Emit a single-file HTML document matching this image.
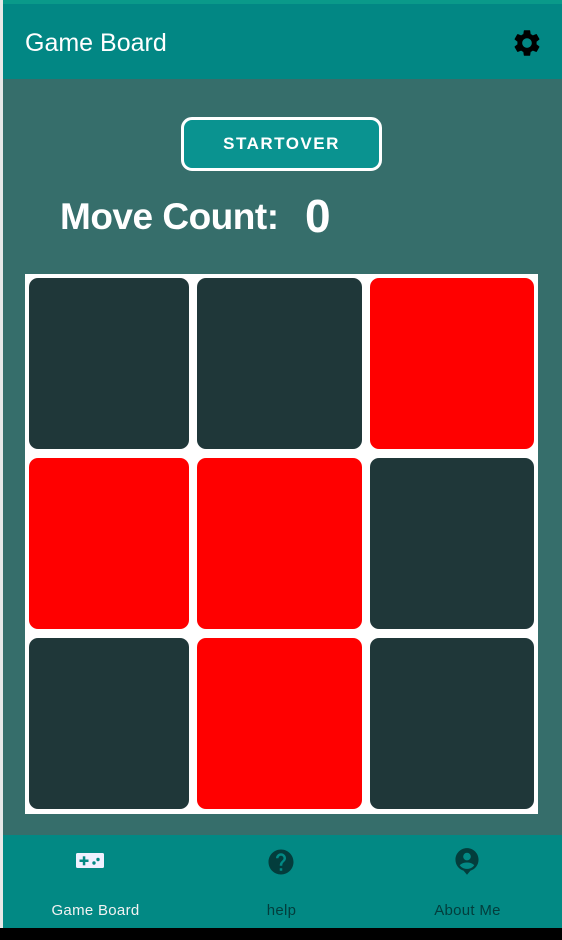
<!DOCTYPE html>
<html><head><style>
*{margin:0;padding:0;box-sizing:border-box}
body{width:562px;height:940px;position:relative;background:#366e6b;font-family:"Liberation Sans",sans-serif;overflow:hidden}
.abs{position:absolute}
.cell{position:absolute;border-radius:9px}
.d{background:#1f3739}.r{background:#ff0000}
.nav{font-size:15px;text-align:center;width:187px;top:902px;letter-spacing:0.3px}
</style></head><body>
<div class="abs" style="left:0;top:0;width:3px;height:940px;background:#e8e8e8"></div>
<div class="abs" style="left:3px;top:0;width:559px;height:4px;background:#0a9a8a"></div>
<div class="abs" style="left:3px;top:4px;width:559px;height:75px;background:#028784"></div>
<div class="abs" style="left:25px;top:29px;color:#fff;font-size:25px">Game Board</div>
<svg class="abs" style="left:511px;top:27px" width="32" height="32" viewBox="0 0 24 24"><path fill="#000" d="M19.14 12.94c.04-.3.06-.61.06-.94 0-.32-.02-.64-.07-.94l2.03-1.58a.49.49 0 0 0 .12-.61l-1.92-3.32a.488.488 0 0 0-.59-.22l-2.39.96c-.5-.38-1.03-.7-1.620-.94l-.36-2.54a.484.484 0 0 0-.48-.41h-3.84c-.24 0-.43.17-.47.41l-.36 2.54c-.59.24-1.13.57-1.62.94l-2.39-.96c-.22-.08-.47 0-.59.22L2.74 8.87c-.12.21-.08.47.12.61l2.03 1.58c-.05.3-.09.63-.09.94s.02.64.07.94l-2.03 1.58a.49.49 0 0 0-.12.61l1.92 3.32c.12.22.37.29.59.22l2.39-.96c.5.38 1.03.7 1.62.94l.36 2.54c.05.24.24.41.48.41h3.84c.24 0 .44-.17.47-.41l.36-2.54c.59-.24 1.13-.56 1.62-.94l2.39.96c.22.08.47 0 .59-.22l1.92-3.32c.12-.22.07-.47-.12-.61l-2.01-1.58zM12 15.6c-1.98 0-3.6-1.62-3.6-3.6s1.62-3.6 3.6-3.6 3.6 1.62 3.6 3.6-1.62 3.6-3.6 3.6z"/></svg>
<div class="abs" style="left:181px;top:117px;width:201px;height:54px;background:#0a9390;border:3px solid #fff;border-radius:11px;color:#fff;font-size:17px;font-weight:bold;letter-spacing:1.5px;text-align:center;line-height:48px">STARTOVER</div>
<div class="abs" style="left:60px;top:196px;color:#fff;font-size:37px;font-weight:bold;letter-spacing:-0.5px">Move Count:</div>
<div class="abs" style="left:305px;top:189px;color:#fff;font-size:46px;font-weight:bold">0</div>
<div class="abs" style="left:25px;top:274px;width:513px;height:540px;background:#fff"></div>
<div class="cell d" style="left:29px;top:278px;width:160px;height:171px"></div>
<div class="cell d" style="left:197px;top:278px;width:165px;height:171px"></div>
<div class="cell r" style="left:370px;top:278px;width:164px;height:171px"></div>
<div class="cell r" style="left:29px;top:458px;width:160px;height:171px"></div>
<div class="cell r" style="left:197px;top:458px;width:165px;height:171px"></div>
<div class="cell d" style="left:370px;top:458px;width:164px;height:171px"></div>
<div class="cell d" style="left:29px;top:638px;width:160px;height:171px"></div>
<div class="cell r" style="left:197px;top:638px;width:165px;height:171px"></div>
<div class="cell d" style="left:370px;top:638px;width:164px;height:171px"></div>
<div class="abs" style="left:3px;top:835px;width:559px;height:93px;background:#028984"></div>
<div class="abs" style="left:0;top:928px;width:562px;height:12px;background:#000"></div>
<svg class="abs" style="left:75px;top:850px" width="30" height="22" viewBox="0 0 30 22"><rect x="1" y="3" width="28" height="15" rx="1.5" fill="#f0f0ff"/><rect x="4.5" y="9.5" width="9" height="2.5" fill="#028984"/><rect x="7.8" y="6.3" width="2.5" height="9" fill="#028984"/><circle cx="19" cy="13" r="1.7" fill="#028984"/><circle cx="23" cy="9.5" r="1.7" fill="#028984"/></svg>
<svg class="abs" style="left:266px;top:847px" width="30" height="30" viewBox="0 0 24 24"><path fill="#033d3c" d="M12 2C6.48 2 2 6.48 2 12s4.48 10 10 10 10-4.48 10-10S17.52 2 12 2zm1 17h-2v-2h2v2zm2.07-7.75l-.9.92C13.45 12.9 13 13.5 13 15h-2v-.5c0-1.1.45-2.1 1.170-2.83l1.24-1.26c.37-.36.59-.86.59-1.41 0-1.1-.9-2-2-2s-2 .9-2 2H8c0-2.21 1.79-4 4-4s4 1.790 4 4c0 .88-.36 1.68-.93 2.25z"/></svg>
<svg class="abs" style="left:453px;top:847px" width="28" height="30" viewBox="0 0 24 26"><path fill="#033d3c" d="M12 1C6.5 1 2 5.5 2 11c0 4.5 3 8.3 7 9.5L12 24l3-3.5c4-1.2 7-5 7-9.5C22 5.5 17.5 1 12 1zm0 4a3.3 3.3 0 1 1 0 6.6A3.3 3.3 0 0 1 12 5zm0 14c-2.7 0-5-1.3-6.3-3.3 1.6-1.6 3.8-2.3 6.3-2.3s4.7.7 6.3 2.3C17 17.7 14.7 19 12 19z"/></svg>
<div class="abs nav" style="left:2px;color:#f2f2f2">Game Board</div>
<div class="abs nav" style="left:188px;color:#033d3c">help</div>
<div class="abs nav" style="left:374px;color:#033d3c">About Me</div>
</body></html>
